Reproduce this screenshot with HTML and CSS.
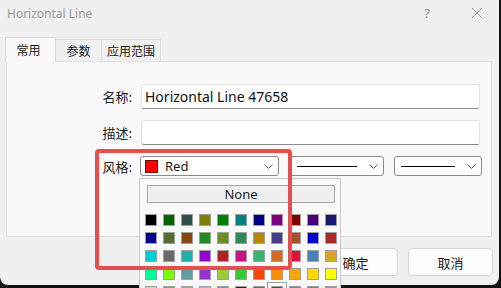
FILE: index.html
```html
<!DOCTYPE html>
<html lang="zh-CN">
<head>
    <meta charset="UTF-8">
    <title>Horizontal Line</title>
    <link rel="stylesheet" href="styles.css">
</head>
<body>
    <div class="page">
        <div class="dialog">
            <div class="titlebar">
                <span class="title">Horizontal Line</span>
                <span class="title-btn help">?</span>
                <span class="title-btn close">
                    <svg width="12" height="12" viewBox="0 0 12 12"><path d="M1 1 L11 11 M11 1 L1 11" stroke="#9a9a9a" stroke-width="1" fill="none"/></svg>
                </span>
            </div>

            <div class="tabs">
                <div class="tab tab-common active">常用</div>
                <div class="tab tab-params">参数</div>
                <div class="tab tab-scope">应用范围</div>
            </div>

            <div class="panel">
                <div class="row">
                    <label class="label">名称:</label>
                    <div class="field">Horizontal Line 47658</div>
                </div>
                <div class="row">
                    <label class="label">描述:</label>
                    <div class="field"></div>
                </div>
                <div class="row row-style">
                    <label class="label">风格:</label>
                    <div class="combo combo-color">
                        <span class="swatch-red"></span>
                        <span class="combo-text">Red</span>
                        <svg class="chevron" width="9" height="5" viewBox="0 0 9 5"><path d="M0.5 0.5 L4.5 4.5 L8.5 0.5" stroke="#606060" fill="none"/></svg>
                    </div>
                    <div class="combo combo-line">
                        <span class="line"></span>
                        <svg class="chevron" width="9" height="5" viewBox="0 0 9 5"><path d="M0.5 0.5 L4.5 4.5 L8.5 0.5" stroke="#606060" fill="none"/></svg>
                    </div>
                    <div class="combo combo-width">
                        <span class="line"></span>
                        <svg class="chevron" width="9" height="5" viewBox="0 0 9 5"><path d="M0.5 0.5 L4.5 4.5 L8.5 0.5" stroke="#606060" fill="none"/></svg>
                    </div>
                </div>
            </div>

            <div class="buttons">
                <button class="btn">确定</button>
                <button class="btn">取消</button>
            </div>
        </div>

        <div class="color-popup">
            <div class="none-btn">None</div>
            <div class="color-grid" id="grid"></div>
        </div>

        <div class="highlight"></div>
    </div>

    <script>
        // MT4 web colour palette, in table order
        const colors = [
            '#000000', '#006400', '#2F4F4F', '#808000', '#008000', '#008080', '#000080', '#800080', '#800000', '#4B0082', '#191970',
            '#00008B', '#556B2F', '#8B4513', '#228B22', '#6B8E23', '#2E8B57', '#B8860B', '#483D8B', '#A0522D', '#0000CD', '#A52A2A',
            '#00CED1', '#696969', '#20B2AA', '#9400D3', '#B22222', '#C71585', '#3CB371', '#D2691E', '#DC143C', '#4682B4', '#DAA520',
            '#00FA9A', '#7CFC00', '#5F9EA0', '#9932CC', '#9ACD32', '#32CD32', '#FF4500', '#FF8C00', '#FFA500', '#FFD700', '#FFFF00',
            '#ADFF2F', '#00FF00', '#00FF7F', '#00FFFF', '#00BFFF', '#0000FF', '#FF00FF', '#FF0000', '#808080', '#708090', '#CD853F'
        ];

        const grid = document.getElementById('grid');
        colors.forEach(c => {
            const cell = document.createElement('span');
            cell.className = 'cell' + (c === '#FF0000' ? ' selected' : '');
            const sw = document.createElement('span');
            sw.className = 'swatch';
            sw.style.background = c;
            cell.appendChild(sw);
            grid.appendChild(cell);
        });
    </script>
</body>
</html>
```

FILE: styles.css
```css
body {
    margin: 0;
    background-color: #121212;
    font-family: 'Noto Sans', 'Noto Sans CJK SC', sans-serif;
    font-size: 12px;
    color: #1a1a1a;
}

.page {
    position: relative;
    width: 501px;
    height: 288px;
    overflow: hidden;
}

.dialog {
    width: 499px;
    height: 285px;
    background-color: #f0f0f0;
    border-radius: 0 0 8px 8px;
}

.titlebar {
    height: 30px;
    display: flex;
    align-items: center;
    padding-left: 7px;
}

.title {
    flex: 1;
    color: #9a9a9a;
    font-size: 12px;
    margin-top: -4px;
}

.title-btn {
    color: #9a9a9a;
    display: flex;
    align-items: center;
    justify-content: center;
    margin-top: -4px;
}

.help {
    width: 16px;
    margin-right: 34px;
    font-size: 13px;
}

.close {
    width: 16px;
    margin-right: 14px;
}

.tabs {
    display: flex;
    align-items: flex-end;
    height: 31px;
    padding-left: 5px;
    position: relative;
    z-index: 1;
}

.tab {
    height: 22px;
    line-height: 22px;
    box-sizing: border-box;
    text-align: center;
    white-space: nowrap;
    border: 1px solid #dcdcdc;
    border-bottom: none;
    border-left: none;
    background-color: #f0f0f0;
    font-family: 'Noto Sans CJK SC', sans-serif;
    font-size: 12px;
}

.tab.active {
    height: 25px;
    line-height: 23px;
    border-left: 1px solid #dcdcdc;
    background-color: #f9f9f9;
    margin-bottom: -1px;
}

.tab-common {
    width: 51px;
    padding-right: 4px;
}

.tab-params {
    width: 46px;
}

.tab-scope {
    width: 59px;
}

.panel {
    margin-left: 6px;
    width: 486px;
    height: 176px;
    box-sizing: border-box;
    background-color: #f9f9f9;
    border: 1px solid #e2e2e2;
    padding-top: 22px;
}

.row {
    display: flex;
    align-items: center;
    margin-bottom: 11px;
}

.label {
    width: 125px;
    text-align: right;
    margin-right: 9px;
    font-family: 'Noto Sans CJK SC', sans-serif;
    font-size: 13px;
}

.field {
    width: 339px;
    height: 25px;
    box-sizing: border-box;
    background-color: #ffffff;
    border: 1px solid #e3e3e3;
    border-bottom: 1px solid #8a8a8a;
    border-radius: 3px;
    padding-left: 3px;
    line-height: 23px;
    font-size: 14px;
    color: #111;
}

.row-style {
    margin-top: 1px;
}

.row-style .label {
    margin-right: 8px;
}

.combo {
    height: 20px;
    box-sizing: border-box;
    background-color: #ffffff;
    border: 1px solid #8a8a8a;
    border-radius: 3px;
    display: flex;
    align-items: center;
    margin-right: 10px;
}

.combo-color {
    width: 139px;
    padding-left: 4px;
}

.combo-line {
    width: 95px;
    padding-left: 7px;
}

.combo-width {
    width: 88px;
    padding-left: 6px;
    margin-right: 0;
}

.swatch-red {
    width: 11px;
    height: 11px;
    background-color: #ff0000;
    border: 1px solid #7a0000;
}

.combo-text {
    flex: 1;
    margin-left: 7px;
    font-size: 13px;
}

.line {
    flex: 1;
    height: 1px;
    background-color: #000;
    margin-right: 12px;
}

.chevron {
    margin-right: 5px;
}

.buttons {
    display: flex;
    justify-content: flex-end;
    gap: 10px;
    padding-right: 6px;
    margin-top: 11px;
}

.btn {
    width: 85px;
    height: 28px;
    background-color: #fdfdfd;
    border: 1px solid #d5d5d5;
    border-radius: 4px;
    font-family: 'Noto Sans CJK SC', sans-serif;
    font-size: 13px;
    color: #1a1a1a;
    padding: 0;
}

/* dropdown of the colour combo, lies over the dialog */
.color-popup {
    position: absolute;
    left: 139px;
    top: 178px;
    width: 202px;
    height: 130px;
    box-sizing: border-box;
    background-color: #f9f9f9;
    border: 1px solid #c8c8c8;
    padding: 6px 0 0 5px;
}

.none-btn {
    width: 188px;
    height: 18px;
    box-sizing: border-box;
    margin-left: 2px;
    border: 1px solid #a8a8a8;
    background-color: #f0f0f0;
    text-align: center;
    line-height: 16px;
    font-size: 13px;
}

.color-grid {
    display: grid;
    grid-template-columns: repeat(11, 12px);
    column-gap: 6px;
    row-gap: 6px;
    margin-top: 11px;
}

.cell {
    width: 12px;
    height: 12px;
    display: flex;
    align-items: center;
    justify-content: center;
}

.swatch {
    width: 10px;
    height: 10px;
    border: 1px solid #a0a0a0;
}

.cell.selected {
    outline: 3px solid #ffffff;
    box-shadow: 0 0 0 4px #a0a0a0;
}

/* annotation frame drawn over the screenshot */
.highlight {
    position: absolute;
    left: 95px;
    top: 149px;
    width: 197px;
    height: 121px;
    box-sizing: border-box;
    border: 4px solid #e35050;
    border-radius: 4px;
}
```
